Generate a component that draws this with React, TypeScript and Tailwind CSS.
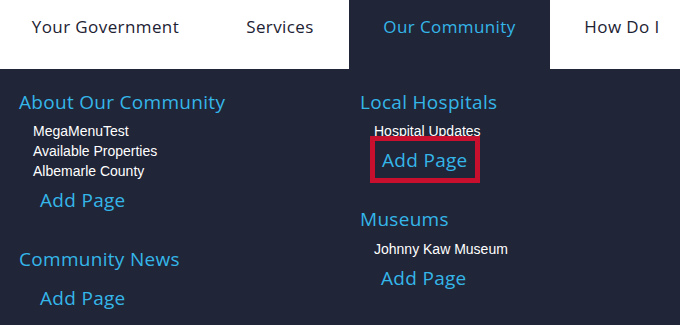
const navItems = [
  { label: "Your Government", width: "w-[211px]", active: false },
  { label: "Services", width: "w-[138px]", active: false },
  { label: "Our Community", width: "w-[201px]", active: true },
  { label: "How Do I", width: "w-[144px]", active: false },
];

const heading = "text-[19px] leading-[24px] text-[#35b6e9] tracking-[0.3px]";
const item = "pl-[14px] text-[14px] leading-[20px] text-white";
const addPage = "text-[19px] leading-[24px] text-[#35b6e9] tracking-[0.3px]";

export default function App() {
  return (
    <div className="w-[680px] h-[325px] overflow-hidden bg-[#202537]" style={{ fontFamily: "'Open Sans', sans-serif" }}>
      <nav className="flex h-[69px] bg-white">
        {navItems.map((n) => (
          <div
            key={n.label}
            className={`${n.width} shrink-0 flex items-center justify-center pb-[15px] text-[17px] tracking-[0.4px] ${
              n.active ? "bg-[#202537] text-[#35b6e9]" : "text-[#1d2233]"
            }`}
          >
            {n.label}
          </div>
        ))}
      </nav>

      <div className="grid grid-cols-[341px_1fr] pl-[19px] pt-[21px]">
        <div>
          <div className={heading}>About Our Community</div>
          <ul className="mt-[7px]" style={{ fontFamily: "'Liberation Sans', Arial, sans-serif" }}>
            <li className={item}>MegaMenuTest</li>
            <li className={item}>Available Properties</li>
            <li className={item}>Albemarle County</li>
          </ul>
          <div className={`${addPage} mt-[7px] pl-[21px]`}>Add Page</div>

          <div className={`${heading} mt-[35px]`}>Community News</div>
          <div className={`${addPage} mt-[15px] pl-[21px]`}>Add Page</div>
        </div>

        <div>
          <div className={heading}>Local Hospitals</div>
          <ul className="mt-[7px]" style={{ fontFamily: "'Liberation Sans', Arial, sans-serif" }}>
            <li className={item}>Hospital Updates</li>
          </ul>
          <div className="relative -mt-[5px] ml-[10px] w-[110px] h-[47px] border-[5px] border-[#c8102e] pl-[7px] pt-[7px]">
            <div className={addPage}>Add Page</div>
          </div>

          <div className={`${heading} mt-[24px]`}>Museums</div>
          <ul className="mt-[8px]" style={{ fontFamily: "'Liberation Sans', Arial, sans-serif" }}>
            <li className={item}>Johnny Kaw Museum</li>
          </ul>
          <div className={`${addPage} mt-[7px] pl-[21px]`}>Add Page</div>
        </div>
      </div>
    </div>
  );
}
